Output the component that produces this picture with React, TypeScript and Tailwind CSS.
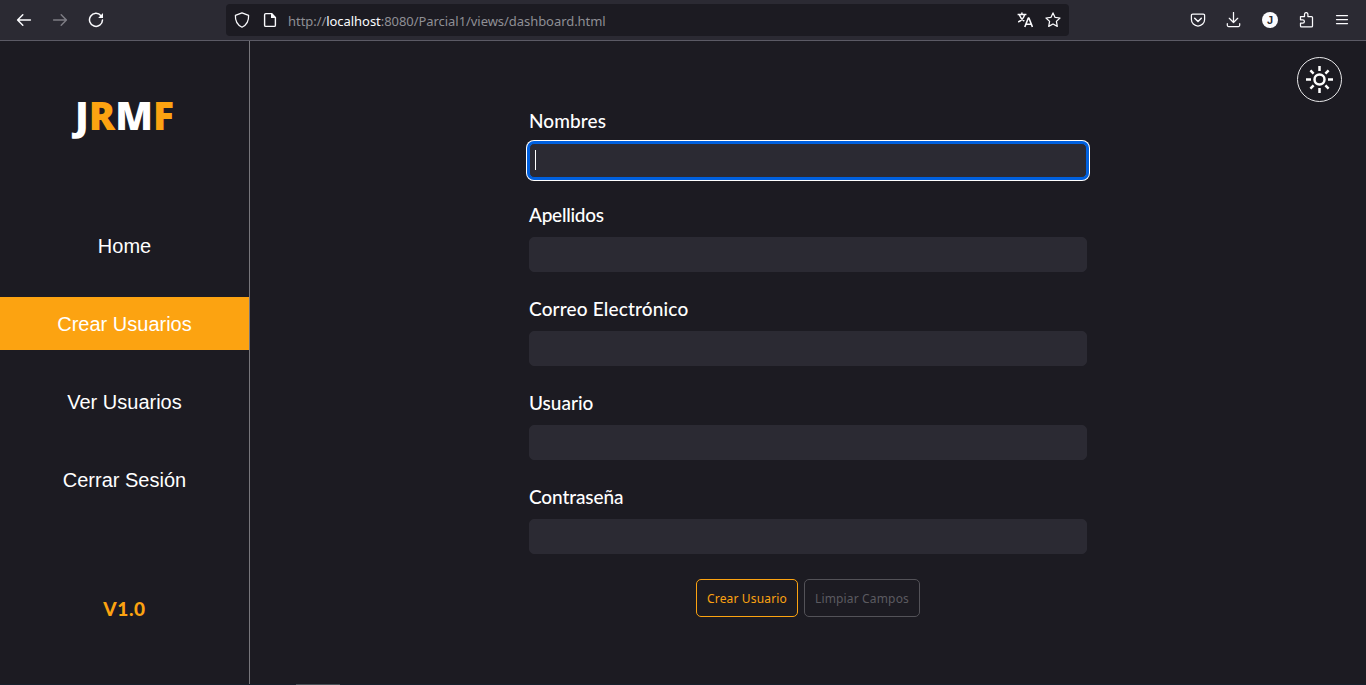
import React from "react";

type IconProps = { children: React.ReactNode; className?: string };

function Icon({ children, className = "" }: IconProps) {
  return (
    <svg
      width="16"
      height="16"
      viewBox="0 0 16 16"
      fill="none"
      stroke="currentColor"
      strokeWidth="1.25"
      strokeLinecap="round"
      strokeLinejoin="round"
      className={`shrink-0 ${className}`}
    >
      {children}
    </svg>
  );
}

function BrowserBar() {
  return (
    <header className="flex h-[41px] shrink-0 items-center border-b border-[#5b5a65] bg-[#2b2a33] text-[#fbfbfe]">
      <div className="flex w-[226px] items-center gap-5 pl-4">
        <Icon>
          <path d="M14.4 8H1.8M6.8 2.8 1.6 8l5.2 5.2" strokeWidth="1.5" />
        </Icon>
        <Icon className="text-[#7d7c84]">
          <path d="M1.6 8h12.6M9.2 2.8 14.4 8l-5.2 5.2" strokeWidth="1.5" />
        </Icon>
        <Icon>
          <path d="M13 3.7A6.5 6.5 0 1 0 14.5 8" strokeWidth="1.5" />
          <path d="M15 1.1v4.8h-4.8z" fill="currentColor" stroke="none" />
        </Icon>
      </div>
      <div className="flex h-8 w-[843px] items-center rounded-[4px] bg-[#1c1b22] pl-2 pr-2">
        <Icon>
          <path d="M8 .8 14.6 3.3c.3 5.8-2 9.8-6.6 11.9C3.4 13.1 1.1 9.1 1.4 3.3z" />
        </Icon>
        <Icon className="ml-3">
          <path d="M2.6 2.8a1.2 1.2 0 0 1 1.2-1.2H9.6L13.4 5.4v7.8a1.2 1.2 0 0 1-1.2 1.2H3.8a1.2 1.2 0 0 1-1.2-1.2z" strokeWidth="1.4" />
          <path d="M9 1.2v4.8h4.8z" fill="currentColor" stroke="none" />
        </Icon>
        <span className="ml-[10px] grow whitespace-nowrap pt-[3px] font-['Noto_Sans',sans-serif] text-[13px] tracking-[-0.05px] text-[#8f8f95]">
          http://<span className="text-[#fbfbfe]">localhost</span>:8080/Parcial1/views/dashboard.html
        </span>
        <Icon>
          <path d="M.6 2.4h8.8M4.9.6v1.8M7.6 2.6C6.8 6 4.6 8.4 1.2 10M2.3 2.8c1 2.8 2.8 5 5 6.4" strokeLinecap="butt" strokeWidth="1.5" />
          <path d="m7.8 15 3.5-9h.6l3.5 9M9 12.3h5.2" strokeLinecap="butt" strokeWidth="1.6" />
        </Icon>
        <Icon className="ml-3">
          <path d="m8 .9 2.1 4.5 4.9.6-3.6 3.4.9 5L8 12l-4.3 2.4.9-5L1 6l4.9-.6z" />
        </Icon>
      </div>
      <div className="ml-auto flex items-center gap-5 pr-4">
        <Icon>
          <path d="M2.7 2.1h10.6a1.3 1.3 0 0 1 1.3 1.3V7.4a6.6 6.6 0 0 1-13.2 0V3.4a1.3 1.3 0 0 1 1.3-1.3z" />
          <path d="M4.7 6.3 8 9.5l3.3-3.2" strokeWidth="1.5" />
        </Icon>
        <Icon>
          <path d="M7.5.5v10M3.3 6.3l4.2 4.2 4.2-4.2M1.3 11.7v1.6a1.2 1.2 0 0 0 1.2 1.2h10a1.2 1.2 0 0 0 1.2-1.2v-1.6" />
        </Icon>
        <span className="flex size-4 items-center justify-center rounded-full bg-[#fbfbfe] font-['Liberation_Sans',sans-serif] text-[11px] font-bold text-[#2b2a33]">
          J
        </span>
        <Icon>
          <path d="M2.5 4.5h4V2.3a1.7 1.7 0 0 1 3.4 0v2.2h3.6a1 1 0 0 1 1 1v8.4a1 1 0 0 1-1 1h-10a1 1 0 0 1-1-1v-2.7h2.2a1.7 1.7 0 0 0 0-3.4H2.5z" />
        </Icon>
        <Icon>
          <path d="M2.5 3.5h11M2.5 7.5h11M2.5 11.5h11" />
        </Icon>
      </div>
    </header>
  );
}

const navItems = [
  { label: "Home", active: false },
  { label: "Crear Usuarios", active: true },
  { label: "Ver Usuarios", active: false },
  { label: "Cerrar Sesión", active: false },
];

function Sidebar() {
  return (
    <aside className="flex w-[250px] shrink-0 flex-col items-center border-r border-[#77767b]">
      <h1 className="mt-11 h-[62px] font-['Open_Sans',sans-serif] text-[39px] leading-[60px] font-extrabold text-white">
        J<span className="text-[#fca311]">R</span>M<span className="text-[#fca311]">F</span>
      </h1>
      <nav className="mt-[72px] flex w-full flex-col gap-[25px] font-['Liberation_Sans',sans-serif] text-[20px] text-white">
        {navItems.map((item) => (
          <a
            key={item.label}
            className={`flex h-[53px] items-center justify-center ${item.active ? "bg-[#fca311]" : ""}`}
          >
            {item.label}
          </a>
        ))}
      </nav>
      <p className="mt-[88px] font-[Lato,sans-serif] text-[19px] leading-[30px] font-black tracking-[0.6px] text-[#fca311]">
        V1.0
      </p>
    </aside>
  );
}

const fields = [
  { label: "Nombres", spacing: "tracking-[0.1px]" },
  { label: "Apellidos", spacing: "tracking-[-0.25px]" },
  { label: "Correo Electrónico", spacing: "tracking-[0.17px]" },
  { label: "Usuario", spacing: "tracking-[0px]" },
  { label: "Contraseña", spacing: "tracking-[-0.1px]" },
];

function Field({ label, spacing, focused }: { label: string; spacing: string; focused: boolean }) {
  return (
    <label className="flex flex-col">
      <span className={`h-[34px] self-start font-[Lato,sans-serif] text-[19px] leading-[24px] font-medium whitespace-nowrap text-white ${spacing}`}>
        {label}
      </span>
      <span
        className={`flex h-[35px] items-start rounded-[5px] border bg-[#2b2a33] pt-[6px] pl-[5px] ${
          focused
            ? "border-[#0060df] shadow-[0_0_0_2px_#0060df,0_0_0_3px_#ffffff]"
            : "border-[#2b2a33]"
        }`}
      >
        {focused && <span className="h-5 w-px bg-white" />}
      </span>
    </label>
  );
}

function ThemeToggle() {
  return (
    <button className="flex size-[45px] items-center justify-center rounded-full border border-[#e8e8ea] text-white">
      <svg width="27" height="27" viewBox="0 0 27 27" fill="none" stroke="currentColor" strokeWidth="2.5">
        <circle cx="13.5" cy="13.5" r="5" />
        <path d="M13.5 0v5M13.5 22v5M0 13.5h5M22 13.5h5M4.4 4.4l3.2 3.2M19.4 19.4l3.2 3.2M4.4 22.6l3.2-3.2M19.4 7.6l3.2-3.2" />
      </svg>
    </button>
  );
}

export default function App() {
  return (
    <div className="flex h-[685px] w-[1366px] flex-col overflow-hidden bg-[#1c1b22]">
      <BrowserBar />
      <div className="flex h-[643px]">
        <Sidebar />
        <main className="flex grow items-start">
          <form className="ml-[279px] mt-[68px] flex w-[558px] flex-col gap-[25px]">
            {fields.map((field, index) => (
              <Field key={field.label} {...field} focused={index === 0} />
            ))}
            <div className="flex justify-center gap-[6px] font-['Noto_Sans',sans-serif] text-[12px] tracking-[0.15px]">
              <button type="button" className="h-[38px] w-[102px] rounded-[5px] border border-[#fca311] pt-[2px] whitespace-nowrap text-[#fca311]">
                Crear Usuario
              </button>
              <button type="button" className="h-[38px] w-[116px] rounded-[5px] border border-[#535258] pt-[2px] whitespace-nowrap text-[#5b5a60]">
                Limpiar Campos
              </button>
            </div>
          </form>
          <div className="ml-auto mr-6 mt-4 flex">
            <ThemeToggle />
          </div>
        </main>
      </div>
      <div className="flex h-px bg-[#17202c] pl-[296px]">
        <span className="h-px w-11 bg-[#465057]" />
      </div>
    </div>
  );
}
